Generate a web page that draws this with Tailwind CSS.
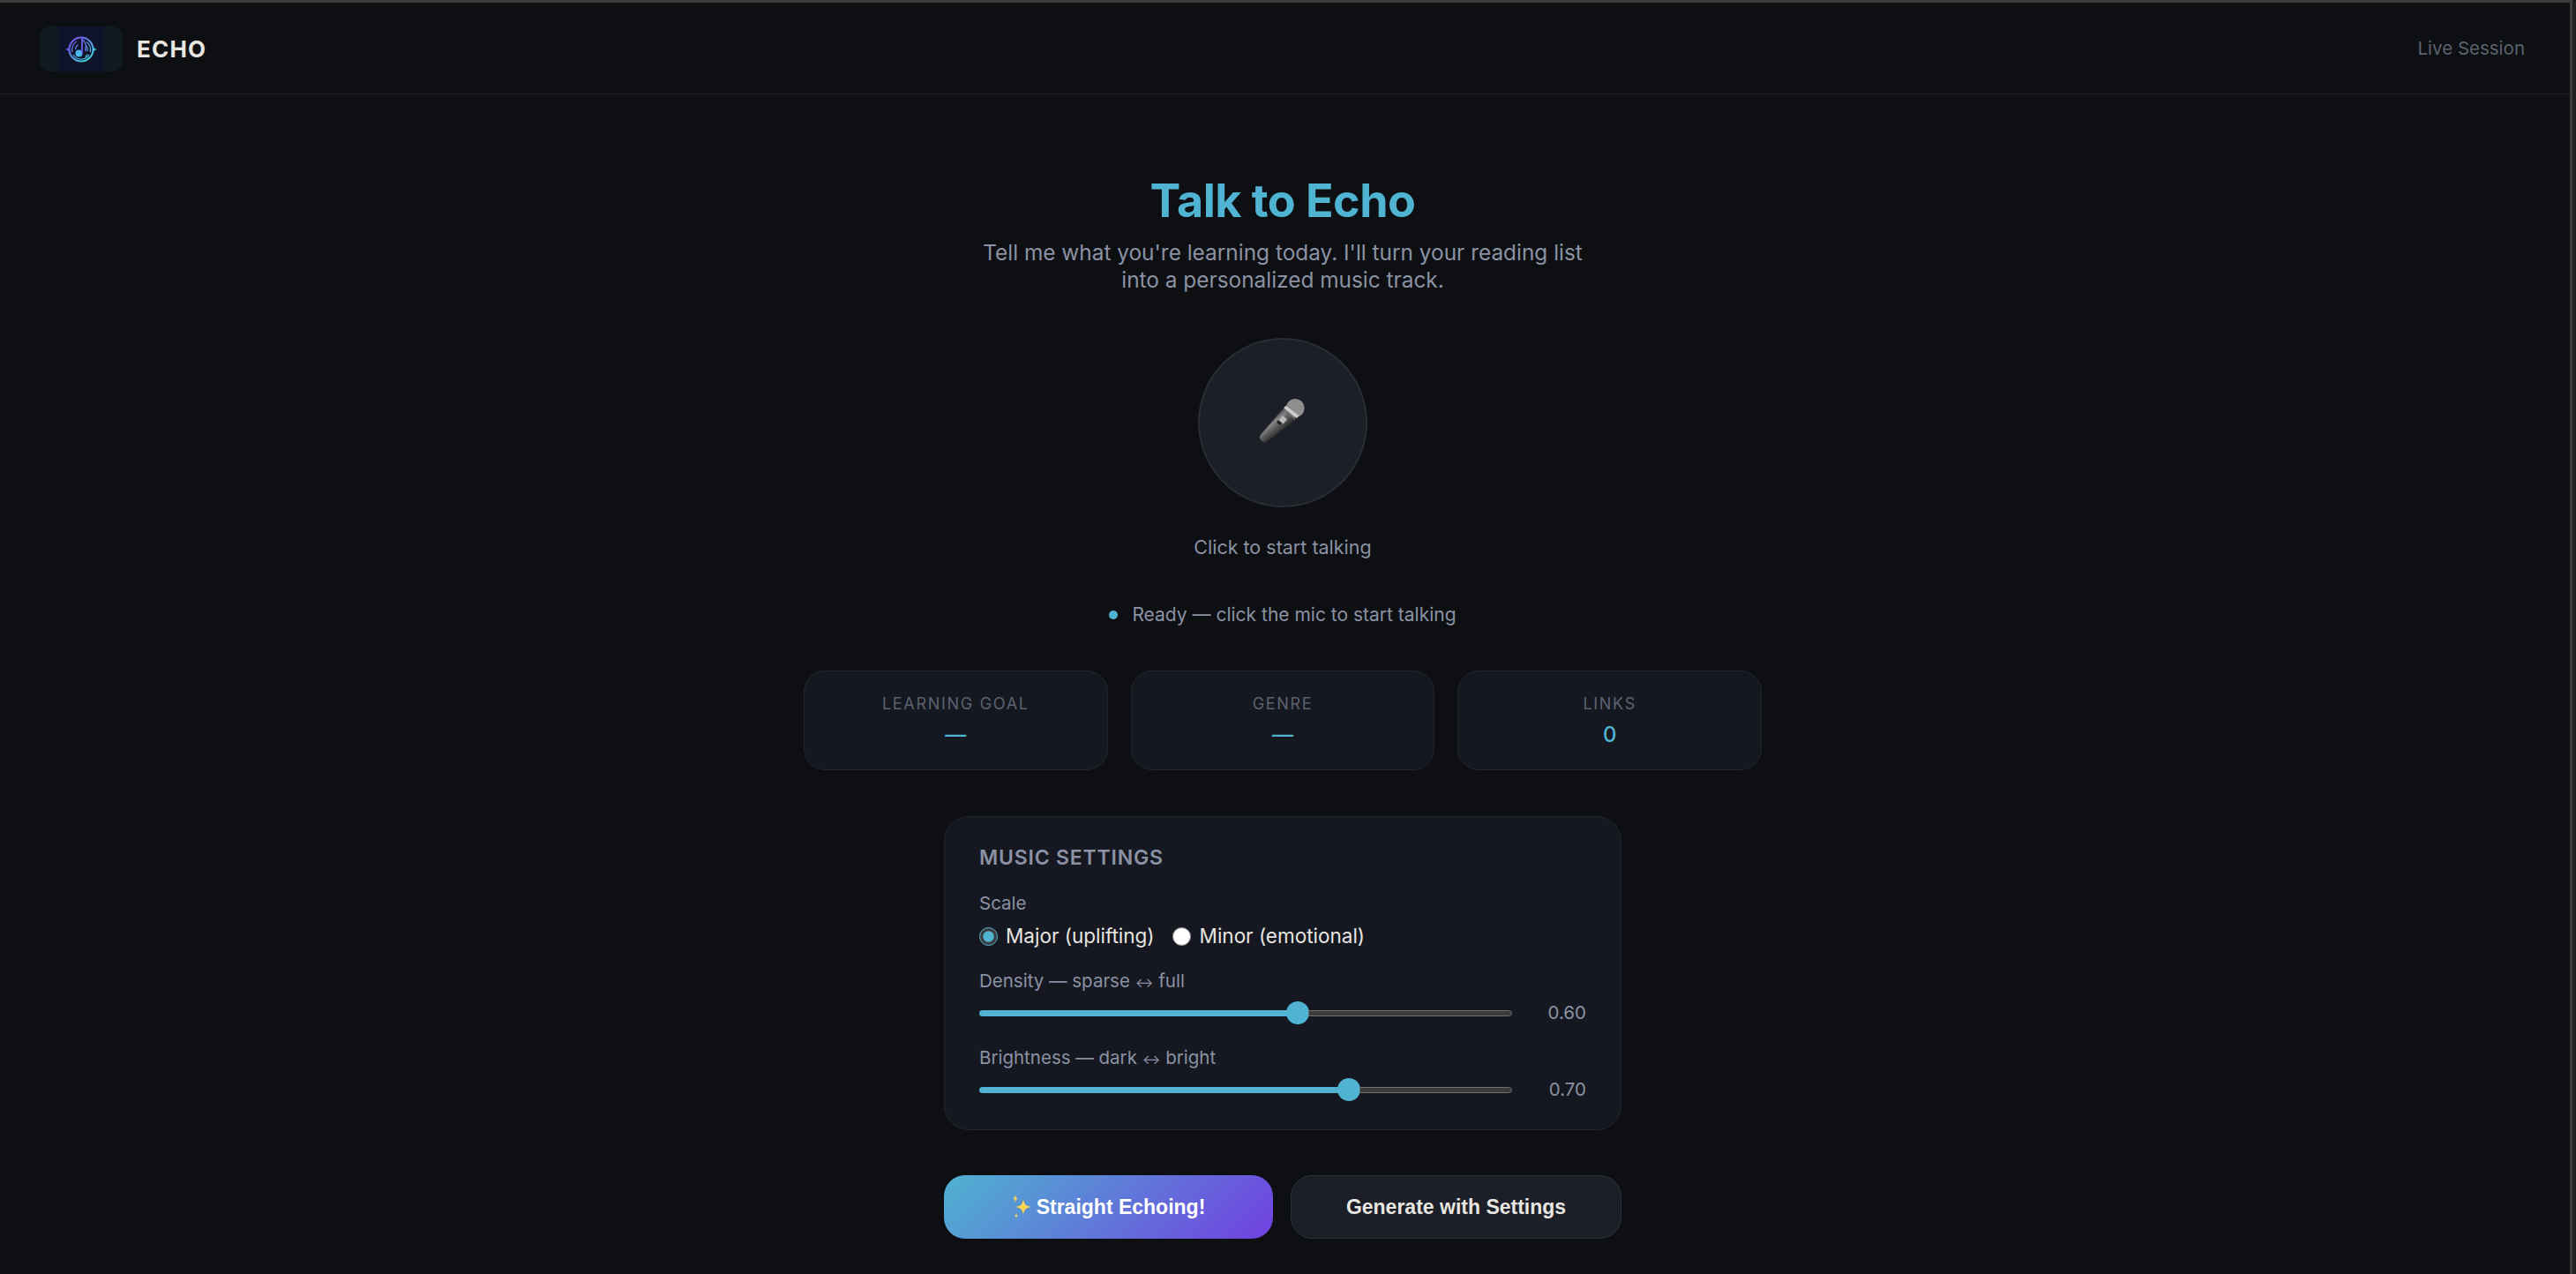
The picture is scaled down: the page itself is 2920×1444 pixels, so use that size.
<!DOCTYPE html>
<html>
<head>
<meta charset="utf-8">
<script src="https://cdn.jsdelivr.net/npm/@tailwindcss/browser@4"></script>
</head>
<body class="m-0 h-[1444px] overflow-hidden bg-[#0d0f12] font-['Inter',sans-serif] text-[#e8e6e1]">
<div class="flex h-[1444px] w-[2920px]">
<div class="flex w-[2913px] shrink-0 flex-col overflow-hidden">
  <div class="h-[3px] shrink-0 bg-[#3c3c3c]"></div>
  <header class="flex h-[104px] shrink-0 items-center justify-between border-b border-[#1d2024] pl-[45px] pr-[51px] pt-[2px]">
    <div class="flex items-center gap-4">
      <div class="flex h-[51px] w-[94px] items-center justify-center rounded-xl bg-[#0f1a21]">
        <div class="flex h-[51px] w-[52px] items-center justify-center bg-[#10142a]">
          <svg width="40" height="30" viewBox="0 0 40 30" fill="none">
            <defs>
            <linearGradient id="g2" gradientUnits="userSpaceOnUse" x1="9" y1="2" x2="27" y2="28"><stop offset="0" stop-color="#7a4ff0"/><stop offset="1" stop-color="#3fd0d8"/></linearGradient></defs>
            <circle cx="20" cy="15" r="13.500" stroke="url(#g2)" stroke-width="2"/>
            <path d="M0.500 15 C4 15 5 14 7 11 L7 19 C5 16 4 15 0.500 15Z" fill="#6a5ae8"/>
            <path d="M39.500 15 C36 15 35 14 33 11 L33 19 C35 16 36 15 39.500 15Z" fill="#45bfe0"/>
            <path d="M10 18 A10.500 10.500 0 0 1 15 6 M30 18 A10.500 10.500 0 0 0 26 6.500 M11 21 A10.500 10.500 0 0 0 29 21" stroke="url(#g2)" stroke-width="1.300"/>
            <path d="M13.500 15 A7 7 0 0 1 16.500 9.500 M27 17 A7 7 0 0 0 26 11 M24.500 23.500 C26 22.500 26.500 22 27 20.500" stroke="url(#g2)" stroke-width="1.100"/>
            <circle cx="17.500" cy="19.500" r="4" fill="#4db8ee"/>
            <path d="M21 19.500 V1.500" stroke="#6f62e6" stroke-width="1.800"/>
            <path d="M21 3.500 C24.500 6 26.500 9 25 17" stroke="#5f70e6" stroke-width="1.600"/>
          </svg>
        </div>
      </div>
      <span class="text-[26px] leading-none font-bold tracking-[1.200px] text-[#e8e6e1]">ECHO</span>
    </div>
    <span class="text-[20.500px] text-[#5c6270]">Live Session</span>
  </header>
  <main class="flex w-[2908px] flex-col items-center pt-[92px]">
    <h1 class="text-[52px] leading-[58px] font-bold tracking-[-0.500px] text-[#4fb3d1]">Talk to Echo</h1>
    <p class="mt-[14px] w-[700px] text-center text-[24.400px] leading-[31px] text-[#8b92a3]">Tell me what you're learning today. I'll turn your reading list into a personalized music track.</p>
    <div class="mt-[50px] flex h-[192px] w-[192px] items-center justify-center rounded-full border-2 border-[#2a2d33] bg-[#1c1f27]">
      <svg class="mb-[4px]" width="54" height="54" viewBox="85 60 160 160">
        <defs>
          <linearGradient id="h" gradientUnits="userSpaceOnUse" x1="128" y1="128" x2="165" y2="172"><stop offset="0" stop-color="#3c3c3c"/><stop offset="0.3" stop-color="#858585"/><stop offset="0.6" stop-color="#5a5a5a"/><stop offset="1" stop-color="#2a2a2a"/></linearGradient>
        </defs>
        <path d="M170 95 L90 188 Q85 197 92 205 Q100 215 110 210 L218 130 Z" fill="url(#h)"/>
        <circle cx="207" cy="97" r="31" fill="#8f8f8f"/>
        <path d="M172 93 L216 127" stroke="#cfcfcf" stroke-width="11"/>
        <path d="M176 108 L206 134" stroke="#6a6a6a" stroke-width="6"/>
        <rect x="156" y="126" width="20" height="20" fill="#b8b8b8" transform="rotate(40 166 136)"/>
        <rect x="146" y="142" width="14" height="9" fill="#1c1c1c" transform="rotate(40 153 146)"/>
      </svg>
    </div>
    <p class="mt-[32px] text-[21.500px] leading-[27px] text-[#8b92a3]">Click to start talking</p>
    <div class="mt-[49px] flex items-center gap-[16px] text-[21px] leading-[27px] text-[#8b92a3]">
      <span class="h-[10px] w-[10px] rounded-full bg-[#4fb3d1]"></span>
      <span>Ready — click the mic to start talking</span>
    </div>
    <div class="mt-[50px] grid w-[1086px] grid-cols-3 gap-[26px]">
      <div class="flex h-[113px] flex-col items-center rounded-[24px] border border-[#23262c] bg-[#151820] pt-[25px]">
        <span class="text-[18px] leading-[24px] tracking-[1.700px] text-[#5c6270]">LEARNING GOAL</span>
        <span class="mt-[8px] text-[24px] leading-[30px] font-medium text-[#4fb3d1]">—</span>
      </div>
      <div class="flex h-[113px] flex-col items-center rounded-[24px] border border-[#23262c] bg-[#151820] pt-[25px]">
        <span class="text-[18px] leading-[24px] tracking-[1.700px] text-[#5c6270]">GENRE</span>
        <span class="mt-[8px] text-[24px] leading-[30px] font-medium text-[#4fb3d1]">—</span>
      </div>
      <div class="flex h-[113px] flex-col items-center rounded-[24px] border border-[#23262c] bg-[#151820] pt-[25px]">
        <span class="text-[18px] leading-[24px] tracking-[1.700px] text-[#5c6270]">LINKS</span>
        <span class="mt-[8px] text-[24px] leading-[30px] font-medium text-[#4fb3d1]">0</span>
      </div>
    </div>
    <section class="mt-[52px] h-[356px] w-[768px] rounded-[28px] border border-[#23262c] bg-[#151820] px-[39px] pt-[31px]">
      <h2 class="text-[23px] leading-[30px] font-semibold tracking-[0.800px] text-[#8b92a3]">MUSIC SETTINGS</h2>
      <p class="mt-[23px] text-[20.500px] leading-[27px] text-[#8b92a3]">Scale</p>
      <div class="mt-[9px] flex h-[30px] items-center text-[22.500px] text-[#e8e6e1]">
        <input type="radio" name="scale" checked class="m-0 h-[21px] w-[21px] accent-[#4fb3d1]">
        <span class="ml-[9px]">Major (uplifting)</span>
        <input type="radio" name="scale" class="m-0 ml-[20px] h-[21px] w-[21px] accent-[#4fb3d1]">
        <span class="ml-[10px]">Minor (emotional)</span>
      </div>
      <p class="mt-[22px] text-[20.500px] leading-[27px] text-[#8b92a3]">Density — sparse <span class="text-[15.500px]">↔</span> full</p>
      <div class="mt-[6px] flex h-[30px] items-center justify-between">
        <div class="flex h-[26px] w-[604px] items-center">
          <div class="h-[7px] w-[349px] rounded-l-full bg-[#4fb3d1]"></div>
          <div class="-ml-[1px] h-[26px] w-[26px] shrink-0 rounded-full bg-[#4fb3d1]"></div>
          <div class="-ml-[1px] h-[7px] flex-1 rounded-r-full border border-[#707070] bg-[#3a3a3a]"></div>
        </div>
        <span class="w-[80px] text-right text-[20.500px] text-[#8b92a3]">0.60</span>
      </div>
      <p class="mt-[22px] text-[20.500px] leading-[27px] text-[#8b92a3]">Brightness — dark <span class="text-[15.500px]">↔</span> bright</p>
      <div class="mt-[6px] flex h-[30px] items-center justify-between">
        <div class="flex h-[26px] w-[604px] items-center">
          <div class="h-[7px] w-[407px] rounded-l-full bg-[#4fb3d1]"></div>
          <div class="-ml-[1px] h-[26px] w-[26px] shrink-0 rounded-full bg-[#4fb3d1]"></div>
          <div class="-ml-[1px] h-[7px] flex-1 rounded-r-full border border-[#707070] bg-[#3a3a3a]"></div>
        </div>
        <span class="w-[80px] text-right text-[20.500px] text-[#8b92a3]">0.70</span>
      </div>
    </section>
    <div class="mt-[51px] flex w-[768px] gap-[20px] font-['Liberation_Sans',sans-serif] text-[23px] font-bold">
      <button class="flex h-[72px] flex-1 items-center justify-center gap-[6px] rounded-[24px] bg-[linear-gradient(135deg,#4fb3d1,#7040e0)] text-white">
        <svg width="22" height="30" viewBox="0 0 22 30" fill="#f7d354"><path d="M13 6 C14 12 16 14 22 15 C16 16 14 18 13 24 C12 18 10 16 4 15 C10 14 12 12 13 6Z"/><path d="M4 1 C4.500 4 5 5 7 5.500 C5 6 4.500 7 4 10 C3.500 7 3 6 1 5.500 C3 5 3.500 4 4 1Z"/><path d="M5 22 C5.300 24 5.700 24.700 7.500 25 C5.700 25.300 5.300 26 5 28 C4.700 26 4.300 25.300 2.500 25 C4.300 24.700 4.700 24 5 22Z"/></svg>
        <span>Straight Echoing!</span>
      </button>
      <button class="h-[72px] flex-1 rounded-[24px] border border-[#2a323a] bg-[#1c1f27] text-[#e8e6e1]">Generate with Settings</button>
    </div>
  </main>
</div>
<div class="w-[3px] shrink-0 bg-[#3c3c3c]"></div>
<div class="w-[4px] shrink-0 bg-[#1f1f1f]"></div>
</div>
</body>
</html>
